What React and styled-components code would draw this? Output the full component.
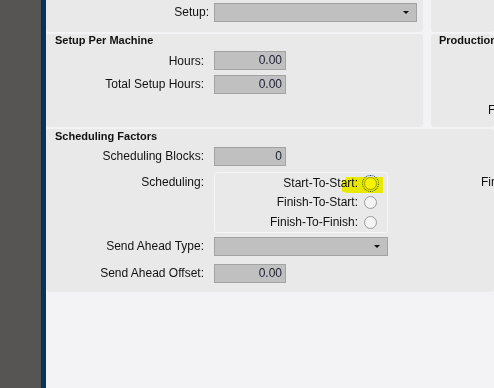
import React from 'react'
import styled, { createGlobalStyle } from 'styled-components'

const GlobalStyle = createGlobalStyle`
  html, body {
    margin: 0;
    padding: 0;
    overflow: hidden;
    font-family: "Liberation Sans", Arial, sans-serif;
  }
`

const Shell = styled.div`
  display: flex;
  height: 100vh;
  overflow: hidden;
`

const Rail = styled.div`
  flex: none;
  width: 41px;
  background: #575553;
`

const Edge = styled.div`
  flex: none;
  width: 5px;
  box-sizing: border-box;
  background: #06355a;
  border-left: 1px solid #1c2631;
`

const Main = styled.div`
  flex: 1;
  min-width: 0;
  display: flex;
  flex-direction: column;
  gap: 2px;
  background: #f3f3f5;
  overflow: hidden;
`

const Band = styled.div`
  display: flex;
  gap: 8px;
  height: ${props => props.h}px;
  flex: none;
`

const Panel = styled.section`
  box-sizing: border-box;
  background: #e9e9e9;
  border-radius: ${props => props.top ? '0 0 3px 3px' : '3px'};
  width: ${props => props.w ? props.w + 'px' : 'auto'};
  flex: ${props => (props.w || props.h) ? 'none' : '1'};
  min-width: 0;
  height: ${props => props.h ? props.h + 'px' : 'auto'};
  padding-top: ${props => props.pt || 0}px;
  overflow: hidden;
  display: flex;
  flex-direction: column;
`

const Title = styled.div`
  font-size: 11px;
  font-weight: bold;
  line-height: 13px;
  color: #111;
  margin-left: ${props => props.ml || 9}px;
  white-space: nowrap;
`

const Field = styled.div`
  display: grid;
  grid-template-columns: ${props => props.lw || 158}px auto;
  column-gap: ${props => props.gap || 10}px;
  align-items: ${props => props.top ? 'start' : 'center'};
  margin-top: ${props => props.mt || 0}px;
`

const Label = styled.label`
  font-size: 12px;
  line-height: 15px;
  color: #111;
  text-align: right;
  white-space: nowrap;
  padding-top: ${props => props.pt || 0}px;
`

const Box = styled.div`
  box-sizing: border-box;
  width: ${props => props.w}px;
  height: 19px;
  background: #c0c0c0;
  border: 1px solid #a3a3a3;
  font-size: 12px;
  line-height: 17px;
  color: #1b1d33;
  text-align: right;
  padding-right: 3px;
  position: relative;
`

const Arrow = styled.span`
  position: absolute;
  right: 7px;
  top: 7px;
  width: 0;
  height: 0;
  border-left: 3px solid transparent;
  border-right: 3px solid transparent;
  border-top: 3px solid #111;
`

const Group = styled.div`
  box-sizing: border-box;
  width: 174px;
  height: 61px;
  padding-top: 1px;
  border: 1px solid #f6f6f6;
  border-radius: 3px;
  display: flex;
  flex-direction: column;
`

const RadioRow = styled.div`
  position: relative;
  height: 20px;
  display: flex;
  align-items: center;
  justify-content: flex-end;
  gap: 6px;
  padding-right: 10px;
  font-size: 12px;
  color: #111;
  white-space: nowrap;
`

const Radio = styled.span`
  box-sizing: border-box;
  width: 13px;
  height: 13px;
  border-radius: 50%;
  border: 1px solid #9c9c9c;
  background: #f4f4f4;
  outline: ${props => props.focus ? '1px dotted #1f3f77' : 'none'};
  outline-offset: 1px;
`

const Highlight = styled.span`
  position: absolute;
  right: 4px;
  top: 3px;
  width: 41px;
  height: 16px;
  background: #ffff00;
  mix-blend-mode: multiply;
  clip-path: polygon(10% 0, 100% 0, 100% 100%, 12% 100%, 0 90%, 0 20%, 8% 18%);
  pointer-events: none;
`

const Split = styled.div`
  display: flex;
`

const Column = styled.div`
  flex: ${props => props.w ? 'none' : '1'};
  width: ${props => props.w ? props.w + 'px' : 'auto'};
  padding-top: ${props => props.pt || 0}px;
  padding-left: ${props => props.pl || 0}px;
  display: flex;
  flex-direction: column;
  min-width: 0;
  white-space: nowrap;
  font-size: 12px;
  line-height: 15px;
  color: #111;
`

function Input ({ w, value }) {
  return <Box w={w}>{value}</Box>
}

function Combo ({ w }) {
  return <Box w={w}><Arrow /></Box>
}

export default function App () {
  return (
    <Shell>
      <GlobalStyle />
      <Rail />
      <Edge />
      <Main>
        <Band h={32}>
          <Panel w={377} top pt={3}>
            <Field lw={163} gap={5}>
              <Label>Setup:</Label>
              <Combo w={203} />
            </Field>
          </Panel>
          <Panel top />
        </Band>
        <Band h={93}>
          <Panel w={377} pt={0}>
            <Title>Setup Per Machine</Title>
            <Field mt={4}>
              <Label pt={2}>Hours:</Label>
              <Input w={72} value='0.00' />
            </Field>
            <Field mt={5}>
              <Label>Total Setup Hours:</Label>
              <Input w={72} value='0.00' />
            </Field>
          </Panel>
          <Panel pt={0}>
            <Title ml={8}>Production</Title>
            <Column pt={56} pl={57}>Fixed Hours:</Column>
          </Panel>
        </Band>
        <Panel h={163} pt={1}>
          <Title>Scheduling Factors</Title>
          <Split>
            <Column w={435}>
              <Field mt={4}>
                <Label>Scheduling Blocks:</Label>
                <Input w={72} value='0' />
              </Field>
              <Field mt={6} top>
                <Label pt={3}>Scheduling:</Label>
                <Group>
                  <RadioRow>
                    Start-To-Start:
                    <Radio focus />
                    <Highlight />
                  </RadioRow>
                  <RadioRow>
                    Finish-To-Start:
                    <Radio />
                  </RadioRow>
                  <RadioRow>
                    Finish-To-Finish:
                    <Radio />
                  </RadioRow>
                </Group>
              </Field>
              <Field mt={4}>
                <Label>Send Ahead Type:</Label>
                <Combo w={174} />
              </Field>
              <Field mt={8}>
                <Label>Send Ahead Offset:</Label>
                <Input w={72} value='0.00' />
              </Field>
            </Column>
            <Column pt={32}>Finish Lag:</Column>
          </Split>
        </Panel>
      </Main>
    </Shell>
  )
}
